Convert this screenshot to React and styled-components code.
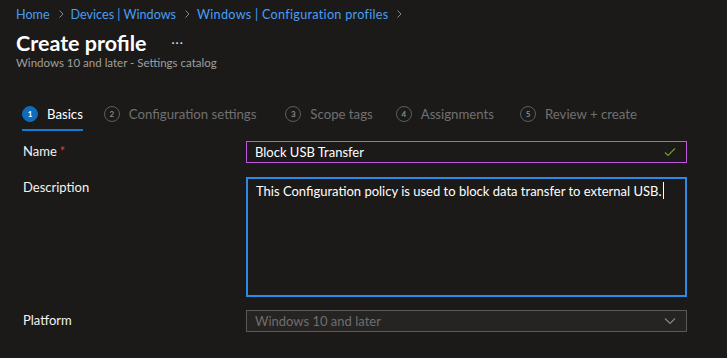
import React from 'react'
import styled, { createGlobalStyle } from 'styled-components'

const GlobalStyle = createGlobalStyle`
	html, body {
		margin: 0;
		padding: 0;
		background: #1b1a19;
	}
	body {
		font-family: 'Segoe UI', Lato, 'Open Sans', sans-serif;
		color: #f3f2f1;
	}
`

const Page = styled.div`
	width: 727px;
	height: 358px;
	overflow: hidden;
	background: #1b1a19;
	box-sizing: border-box;
	padding: 5px 0 0 16px;
`

const Breadcrumb = styled.nav`
	display: flex;
	align-items: center;
	height: 18px;
	font-size: 12.6px;
	color: #479ef5;
`

const Crumb = styled.span`
	white-space: nowrap;
	letter-spacing: ${(p) => p.ls || 0}px;
`

const Chevron = styled.svg`
	width: 8px;
	height: 8px;
	margin: 0 6px 0 7px;
	flex: none;
`

const TitleRow = styled.div`
	display: flex;
	align-items: center;
	margin-top: 7px;
	height: 26px;
`

const Title = styled.h1`
	margin: 0;
	font-size: 21.5px;
	font-weight: 700;
	color: #ffffff;
`

const More = styled.span`
	margin-left: 25px;
	font-size: 12px;
	color: #e0e0e0;
	position: relative;
	top: -1px;
	letter-spacing: 1px;
`

const Subtitle = styled.div`
	font-size: 11.5px;
	color: #a19f9d;
	margin-top: 0;
	line-height: 14px;
`

const Tabs = styled.div`
	display: flex;
	margin-top: 29px;
	margin-left: 6px;
	height: 34px;
`

const Tab = styled.div`
	display: flex;
	align-items: center;
	height: 32px;
	margin-right: ${(p) => p.gap}px;
	border-bottom: 2px solid ${(p) => (p.active ? '#1479d4' : 'transparent')};
	color: ${(p) => (p.active ? '#ffffff' : '#707070')};
	font-size: 13.2px;
	white-space: nowrap;
	align-self: flex-start;
	box-sizing: border-box;
`

const Step = styled.span`
	display: inline-flex;
	align-items: center;
	justify-content: center;
	width: 16px;
	height: 16px;
	box-sizing: border-box;
	border-radius: 50%;
	margin-right: 9px;
	font-size: 8px;
	font-weight: 700;
	background: ${(p) => (p.active ? '#0f6cbd' : 'transparent')};
	border: 1px solid ${(p) => (p.active ? '#0f6cbd' : '#5e5e5e')};
	color: ${(p) => (p.active ? '#ffffff' : '#8a8a8a')};
`

const Form = styled.div`
	display: flex;
	flex-direction: column;
	margin-top: 8px;
	margin-left: 7px;
`

const Row = styled.div`
	display: flex;
	align-items: flex-start;
	margin-bottom: ${(p) => p.mb}px;
`

const Label = styled.label`
	width: 223px;
	flex: none;
	font-size: 13px;
	color: #f3f2f1;
	line-height: 21px;
`

const Required = styled.span`
	color: #e0393e;
	margin-left: 3px;
`

const Field = styled.div`
	width: 441px;
	height: ${(p) => p.h}px;
	box-sizing: border-box;
	display: flex;
	align-items: ${(p) => (p.multi ? 'flex-start' : 'center')};
	padding: ${(p) => (p.multi ? '2px 8px' : '0 8px')};
	border: ${(p) => p.bw || 1}px solid ${(p) => p.border};
	background: ${(p) => p.bg || 'transparent'};
	color: ${(p) => p.color || '#ffffff'};
	font-size: 13px;
	line-height: 20px;
`

const FieldText = styled.span`
	flex: 1;
	white-space: nowrap;
`

const Caret = styled.span`
	display: inline-block;
	width: 1px;
	height: 17px;
	background: #ffffff;
	vertical-align: -3px;
	margin-left: 1px;
`

const Icon = styled.svg`
	flex: none;
	width: ${(p) => p.size}px;
	height: ${(p) => p.size}px;
	margin-right: 2px;
`

const ChevronRight = () => (
	<Chevron viewBox="0 0 8 8">
		<path d="M2.5 0.5 L6 4 L2.5 7.5" fill="none" stroke="#8a8886" strokeWidth="1" />
	</Chevron>
)

const steps = [
	{ n: 1, label: 'Basics', gap: 21, active: true },
	{ n: 2, label: 'Configuration settings', gap: 29 },
	{ n: 3, label: 'Scope tags', gap: 23 },
	{ n: 4, label: 'Assignments', gap: 26 },
	{ n: 5, label: 'Review + create', gap: 0 },
]

const App = () => {
	return (
		<Page>
			<GlobalStyle />
			<Breadcrumb>
				<Crumb>Home</Crumb>
				<ChevronRight />
				<Crumb>Devices | Windows</Crumb>
				<ChevronRight />
				<Crumb ls={0.3}>Windows | Configuration profiles</Crumb>
				<ChevronRight />
			</Breadcrumb>
			<TitleRow>
				<Title>Create profile</Title>
				<More>···</More>
			</TitleRow>
			<Subtitle>Windows 10 and later - Settings catalog</Subtitle>
			<Tabs>
				{steps.map((s) => (
					<Tab key={s.n} active={s.active} gap={s.gap}>
						<Step active={s.active}>{s.n}</Step>
						{s.label}
					</Tab>
				))}
			</Tabs>
			<Form>
				<Row mb={14}>
					<Label>
						Name<Required>*</Required>
					</Label>
					<Field h={22} border="#c255e0">
						<FieldText>Block USB Transfer</FieldText>
						<Icon size={12} viewBox="0 0 12 12">
							<path d="M1 6.5 L4 9.5 L11 2.5" fill="none" stroke="#6f9b2e" strokeWidth="1.2" />
						</Icon>
					</Field>
				</Row>
				<Row mb={13}>
					<Label>Description</Label>
					<Field h={120} bw={2} border="#2b8ae6" multi>
						<FieldText>
							This Configuration policy is used to block data transfer to external USB.
							<Caret />
						</FieldText>
					</Field>
				</Row>
				<Row mb={0}>
					<Label>Platform</Label>
					<Field h={22} border="#5a5958" bg="#252423" color="#6f6e6d">
						<FieldText>Windows 10 and later</FieldText>
						<Icon size={12} viewBox="0 0 12 12">
							<path d="M1 3.5 L6 8.5 L11 3.5" fill="none" stroke="#8a8886" strokeWidth="1.1" />
						</Icon>
					</Field>
				</Row>
			</Form>
		</Page>
	)
}

export default App
